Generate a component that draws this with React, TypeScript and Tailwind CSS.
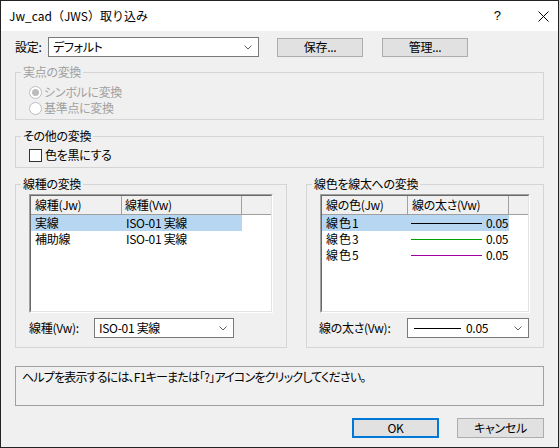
import type { JSX, ReactNode } from 'react';

const FONT = "font-['Noto_Sans_CJK_JP','Noto_Sans',sans-serif]";

function Chevron(): JSX.Element {
  return (
    <svg width="8" height="5" viewBox="0 0 8 5" className="shrink-0">
      <polyline points="0.5,0.5 4,4 7.5,0.5" fill="none" stroke="#606060" strokeWidth="1" />
    </svg>
  );
}

function Combo({ className, children }: { className: string; children: ReactNode }): JSX.Element {
  return (
    <div className={`flex items-center h-[20px] bg-white border border-[#7a7a7a] pl-[4px] pr-[6px] ${className}`}>
      <div className="flex-1 flex items-center whitespace-nowrap">{children}</div>
      <Chevron />
    </div>
  );
}

function Group({ title, disabled, className, children }: { title: string; disabled?: boolean; className: string; children: ReactNode }): JSX.Element {
  return (
    <fieldset className={`border border-[#d5d5d5] ${className}`}>
      <legend className={`ml-[5px] px-[2px] leading-[16px] ${disabled ? 'text-[#a0a0a0]' : 'text-black'}`}>{title}</legend>
      {children}
    </fieldset>
  );
}

function ListBox({ className, children }: { className: string; children: ReactNode }): JSX.Element {
  // sunken client edge
  return (
    <div className={`flex border border-t-[#a0a0a0] border-l-[#a0a0a0] border-r-white border-b-white ${className}`}>
      <div className="flex-1 flex flex-col bg-white border border-t-[#696969] border-l-[#696969] border-r-[#e3e3e3] border-b-[#e3e3e3]">
        {children}
      </div>
    </div>
  );
}

const LINE_TYPES = [
  { jw: '実線', vw: 'ISO-01 実線', selected: true },
  { jw: '補助線', vw: 'ISO-01 実線', selected: false },
];

const LINE_COLORS = [
  { name: '線色1', color: 'bg-black', selected: true },
  { name: '線色3', color: 'bg-[#00a000]', selected: false },
  { name: '線色5', color: 'bg-[#a000a0]', selected: false },
];

export default function App(): JSX.Element {
  return (
    <div className={`w-[559px] h-[448px] flex flex-col border border-[#222] bg-[#f0f0f0] text-[12px] leading-[16px] text-black ${FONT}`}>

      {/* Title bar */}
      <div className="h-[30px] bg-white flex items-center pl-[8px] shrink-0">
        <span>Jw_cad（JWS）取り込み</span>
        <div className="ml-auto flex items-center">
          <span className="text-[13px] font-['Liberation_Sans',sans-serif]">?</span>
          <svg width="11" height="11" viewBox="0 0 11 11" className="ml-[37px] mr-[9px]">
            <line x1="0.5" y1="0.5" x2="10.5" y2="10.5" stroke="#000" strokeWidth="1" />
            <line x1="10.5" y1="0.5" x2="0.5" y2="10.5" stroke="#000" strokeWidth="1" />
          </svg>
        </div>
      </div>

      <div className="flex-1 flex flex-col px-[14px] [font-feature-settings:'palt'] tracking-[-0.3px]">

        {/* Settings row */}
        <div className="flex items-center h-[20px] mt-[6px]">
          <span className="w-[33px]">設定:</span>
          <Combo className="w-[211px]">デフォルト</Combo>
          <button className="ml-[18px] w-[86px] h-[19px] bg-[#e1e1e1] border border-[#adadad]">保存...</button>
          <button className="ml-[19px] w-[86px] h-[19px] bg-[#e1e1e1] border border-[#adadad]">管理...</button>
        </div>

        {/* 実点の変換 (disabled) */}
        <Group title="実点の変換" disabled className="mt-[7px] h-[56px]">
          <div className="flex flex-col pl-[13px] mt-[4px] text-[#a0a0a0]">
            <div className="flex items-center h-[16px] gap-[2px]">
              <div className="w-[13px] h-[13px] rounded-full border border-[#bcbcbc] bg-white flex items-center justify-center">
                <div className="w-[7px] h-[7px] rounded-full bg-[#bcbcbc]" />
              </div>
              <span>シンボルに変換</span>
            </div>
            <div className="flex items-center h-[16px] gap-[2px]">
              <div className="w-[13px] h-[13px] rounded-full border border-[#bcbcbc] bg-white" />
              <span>基準点に変換</span>
            </div>
          </div>
        </Group>

        {/* その他の変換 */}
        <Group title="その他の変換" className="mt-[8px] h-[40px]">
          <div className="flex items-center h-[16px] mt-[3px] pl-[13px] gap-[3px]">
            <div className="w-[13px] h-[13px] border border-[#333] bg-white" />
            <span>色を黒にする</span>
          </div>
        </Group>

        {/* Lower groups */}
        <div className="flex mt-[8px] gap-[19px]">

          <Group title="線種の変換" className="w-[272px] h-[172px]">
            <ListBox className="mt-[2px] ml-[13px] w-[244px] h-[119px]">
              <div className="flex h-[19px] bg-[#f0f0f0] border-b border-[#a0a0a0]">
                <div className="w-[91px] pl-[4px] flex items-center border-r border-[#a0a0a0]">線種(Jw)</div>
                <div className="w-[120px] pl-[3px] flex items-center border-r border-[#a0a0a0]">線種(Vw)</div>
                <div className="flex-1" />
              </div>
              {LINE_TYPES.map((row) => (
                <div key={row.jw} className="flex h-[16px]">
                  <div className={`flex ${row.selected ? 'bg-[#b6d6f2]' : ''}`}>
                    <div className="w-[91px] pl-[4px] flex items-center">{row.jw}</div>
                    <div className="w-[120px] pl-[4px] flex items-center">{row.vw}</div>
                  </div>
                </div>
              ))}
            </ListBox>
            <div className="flex items-center mt-[5px] ml-[13px]">
              <span className="w-[65px]">線種(Vw):</span>
              <Combo className="w-[140px]">ISO-01 実線</Combo>
            </div>
          </Group>

          <Group title="線色を線太への変換" className="flex-1 h-[172px]">
            <ListBox className="mt-[2px] ml-[13px] w-[210px] h-[119px]">
              <div className="flex h-[19px] bg-[#f0f0f0] border-b border-[#a0a0a0]">
                <div className="w-[86px] pl-[4px] flex items-center border-r border-[#a0a0a0]">線の色(Jw)</div>
                <div className="w-[101px] pl-[4px] flex items-center border-r border-[#a0a0a0]">線の太さ(Vw)</div>
                <div className="flex-1" />
              </div>
              {LINE_COLORS.map((row) => (
                <div key={row.name} className="flex h-[16px]">
                  <div className={`flex ${row.selected ? 'bg-[#b6d6f2]' : ''}`}>
                    <div className="w-[86px] pl-[4px] flex items-center tracking-[1px]">{row.name}</div>
                    <div className="w-[101px] pl-[3px] flex items-center">
                      <div className={`w-[71px] h-px ${row.color}`} />
                      <span className="ml-[4px]">0.05</span>
                    </div>
                  </div>
                </div>
              ))}
            </ListBox>
            <div className="flex items-center mt-[5px] ml-[12px]">
              <span className="w-[88px]">線の太さ(Vw):</span>
              <Combo className="w-[122px]">
                <div className="w-[47px] h-px bg-black ml-[2px]" />
                <span className="ml-[5px]">0.05</span>
              </Combo>
            </div>
          </Group>
        </div>

        {/* Help text */}
        <div className="mt-[18px] h-[40px] border border-[#a0a0a0] pl-[6px] pt-[2px] tracking-[-0.8px]">
          ヘルプを表示するには、F1キーまたは「?」アイコンをクリックしてください。
        </div>

        {/* Dialog buttons */}
        <div className="flex justify-end gap-[18px] mt-[12px]">
          <button className="w-[87px] h-[20px] bg-[#e1e1e1] border-2 border-[#0078d7]">OK</button>
          <button className="w-[87px] h-[20px] bg-[#e1e1e1] border border-[#adadad]">キャンセル</button>
        </div>
      </div>
    </div>
  );
}
